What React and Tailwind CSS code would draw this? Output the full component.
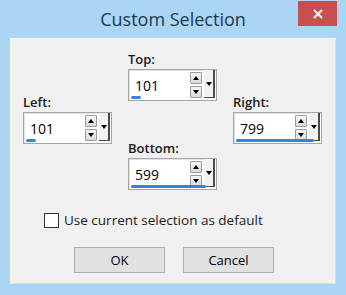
import React from 'react';

const font = { fontFamily: '"Open Sans", "Noto Sans", sans-serif' };

const SpinBox = ({ value, bar }) => (
    <div className="relative flex h-[32px] w-[89px] items-center border border-[#a6a6a6] bg-white shadow-[inset_1px_1px_0_#e3e3e3]">
        <span className="flex-1 pl-[6px] text-[14px] font-medium text-black">{value}</span>
        <div className="flex h-full flex-col justify-center gap-[2px]">
            <div className="flex h-[12px] w-[12px] items-center justify-center rounded-[1px] border border-[#9a9a9a] bg-gradient-to-b from-[#f6f6f6] to-[#dadada]">
                <div className="h-0 w-0 border-x-[3.5px] border-b-[4px] border-x-transparent border-b-black" />
            </div>
            <div className="flex h-[12px] w-[12px] items-center justify-center rounded-[1px] border border-[#9a9a9a] bg-gradient-to-b from-[#f6f6f6] to-[#dadada]">
                <div className="h-0 w-0 border-x-[3.5px] border-t-[4px] border-x-transparent border-t-black" />
            </div>
        </div>
        <div className="ml-[2px] mr-[1px] flex h-[28px] w-[11px] items-center justify-center self-start border-r-2 border-b border-[#4a4a4a] bg-[#f2f2f2]">
            <div className="h-0 w-0 border-x-[3px] border-t-[4px] border-x-transparent border-t-black" />
        </div>
        <div className="absolute bottom-[1px] left-[2px] h-[3px] rounded-full bg-[#2f86dc]" style={{ width: bar }} />
    </div>
);

const Field = ({ label, value, bar, className = '' }) => (
    <div className={'flex flex-col ' + className}>
        <span className="text-[13px] leading-[17px] font-semibold text-[#1a1a1a]">{label}</span>
        <div className="mt-[1px]">
            <SpinBox value={value} bar={bar} />
        </div>
    </div>
);

export default function App() {
    return (
        <div style={font} className="flex h-[295px] w-[346px] flex-col bg-[#aad5f4]">
            <div className="relative flex h-[38px] items-center justify-center">
                <span className="mt-[1px] text-[18px] text-[#1d3a52]">Custom Selection</span>
                <button className="absolute right-[9px] top-[1px] flex h-[25px] w-[39px] items-center justify-center bg-[#c74f4f]">
                    <svg width="10" height="10" viewBox="0 0 10 10">
                        <path d="M1 1 L9 9 M9 1 L1 9" stroke="white" strokeWidth="2" />
                    </svg>
                </button>
            </div>
            <div className="ml-[10px] h-[246px] w-[326px] border-t border-l border-white bg-[#f0f0f0] shadow-[inset_-1px_-1px_0_#dcdcdc]">
                <div className="flex h-[160px] gap-[16px] pl-[12px]">
                    <Field label="Left:" value="101" bar="10px" className="pt-[55px]" />
                    <div className="flex flex-col gap-[39px] pt-[12px]">
                        <Field label="Top:" value="101" bar="10px" />
                        <Field label="Bottom:" value="599" bar="75px" />
                    </div>
                    <Field label="Right:" value="799" bar="78px" className="pt-[55px]" />
                </div>
                <label className="mt-[11px] flex items-center gap-[5px] pl-[33px] text-[13.5px] font-medium text-[#1a1a1a]">
                    <span className="h-[15px] w-[15px] border border-[#333] bg-white" />
                    Use current selection as default
                </label>
                <div className="mt-[17px] flex gap-[18px] pl-[63px]">
                    <button className="h-[26px] w-[91px] border border-[#adadad] bg-[#e1e1e1] text-[13px] font-medium text-black">OK</button>
                    <button className="h-[26px] w-[91px] border border-[#adadad] bg-[#e1e1e1] text-[13px] font-medium text-black">Cancel</button>
                </div>
            </div>
        </div>
    );
}
